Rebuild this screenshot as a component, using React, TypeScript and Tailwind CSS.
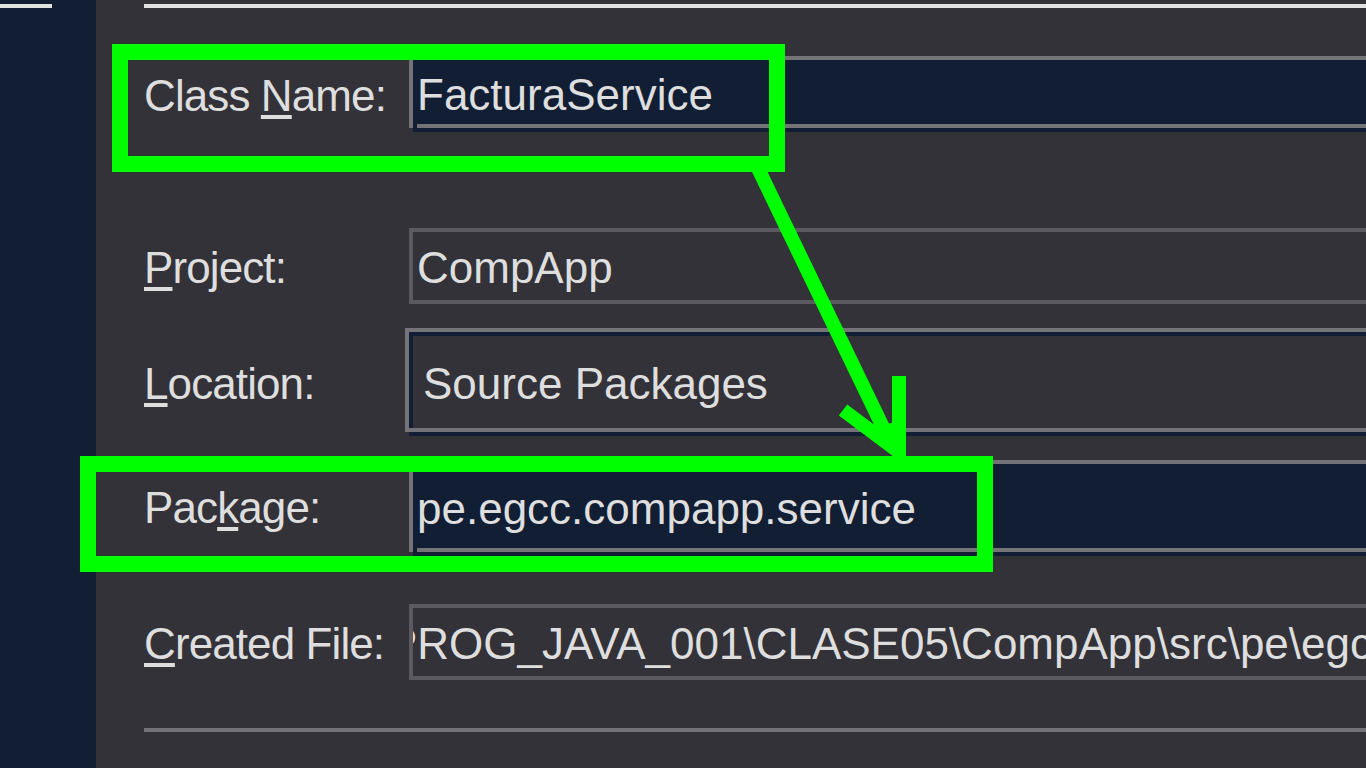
const FONT = { fontFamily: '"Liberation Sans", Arial, sans-serif' }

function Key({ children }: { children: string }) {
  return <span className="underline decoration-4 underline-offset-4">{children}</span>
}

function Label({ children, shift = 'pt-[4px]' }: { children: React.ReactNode; shift?: string }) {
  return <div className={`w-[265px] shrink-0 flex items-center whitespace-nowrap tracking-[-0.9px] ${shift}`}>{children}</div>
}

// editable text field: sunken border, dark fill
function EditField({ value, h }: { value: string; h: string }) {
  return (
    <div className="flex-1 flex flex-col">
      <div className={`${h} border-t-4 border-l-4 border-[#747378] bg-[#121e33] flex flex-col`}>
        <div className="flex-1 flex items-center pl-[4px] pt-[6px] whitespace-nowrap overflow-hidden">{value}</div>
        <div className="h-[4px] ml-[4px] bg-[#747378]" />
      </div>
      <div className="h-[4px] ml-[4px] bg-[#121e33]" />
    </div>
  )
}

// read-only field
function ReadField({ children }: { children: React.ReactNode }) {
  return (
    <div className="flex-1 h-[76px] border-4 border-r-0 border-[#5b5a60] flex items-center pt-[4px] whitespace-nowrap overflow-hidden">
      {children}
    </div>
  )
}

export default function App() {
  return (
    <div className="relative w-[1366px] h-[768px] overflow-hidden flex bg-[#333238] text-[#dedede] text-[44px] leading-normal" style={FONT}>
      {/* left strip */}
      <div className="w-[96px] shrink-0 bg-[#111e33] pt-[4px]">
        <div className="h-[4px] w-[52px] bg-[#e2e2e2]" />
      </div>

      <div className="flex-1 pl-[48px] flex flex-col">
        <div className="mt-[4px] h-[4px] bg-[#e2e2e2]" />

        {/* Class Name */}
        <div className="mt-[48px] flex h-[76px]">
          <Label>
            <span>Class <Key>N</Key>ame:</span>
          </Label>
          <EditField value="FacturaService" h="h-[72px]" />
        </div>

        {/* Project */}
        <div className="mt-[96px] flex h-[76px]">
          <Label>
            <span><Key>P</Key>roject:</span>
          </Label>
          <ReadField>
            <span className="pl-[4px]">CompApp</span>
          </ReadField>
        </div>

        {/* Location */}
        <div className="mt-[24px] flex h-[108px]">
          <Label>
            <span><Key>L</Key>ocation:</span>
          </Label>
          <div className="flex-1 -ml-[4px] flex flex-col">
            <div className="h-[104px] border-t-4 border-l-4 border-b-4 border-[#747378]">
              <div className="h-full border-t-4 border-l-4 border-[#121e33] flex items-center pl-[10px] pt-[4px] whitespace-nowrap">
                Source Packages
              </div>
            </div>
            <div className="h-[4px] ml-[4px] bg-[#121e33]" />
          </div>
        </div>

        {/* Package */}
        <div className="mt-[24px] flex h-[96px]">
          <Label shift="pt-0">
            <span>Pac<Key>k</Key>age:</span>
          </Label>
          <EditField value="pe.egcc.compapp.service" h="h-[92px]" />
        </div>

        {/* Created File */}
        <div className="mt-[48px] flex h-[76px]">
          <Label>
            <span><Key>C</Key>reated File:</span>
          </Label>
          <ReadField>
            <span className="-ml-[25px]">PROG_JAVA_001\CLASE05\CompApp\src\pe\egcc\compapp\service\FacturaService.java</span>
          </ReadField>
        </div>

        <div className="mt-[48px] h-[4px] bg-[#747378]" />
      </div>

      {/* annotation overlays */}
      <div className="absolute left-[112px] top-[44px] w-[673px] h-[128px] border-[16px] border-[#00ff00] pointer-events-none" />
      <div className="absolute left-[80px] top-[456px] w-[913px] h-[116px] border-[16px] border-[#00ff00] pointer-events-none" />
      <svg className="absolute inset-0 pointer-events-none" width="1366" height="768" viewBox="0 0 1366 768">
        <line x1="754" y1="160" x2="893" y2="448" stroke="#00ff00" strokeWidth="14" />
        <polyline points="843,410 899,452 899,376" fill="none" stroke="#00ff00" strokeWidth="14" strokeLinejoin="miter" />
        <polygon points="872,430 899,452 899,420" fill="#00ff00" />
      </svg>
    </div>
  )
}
